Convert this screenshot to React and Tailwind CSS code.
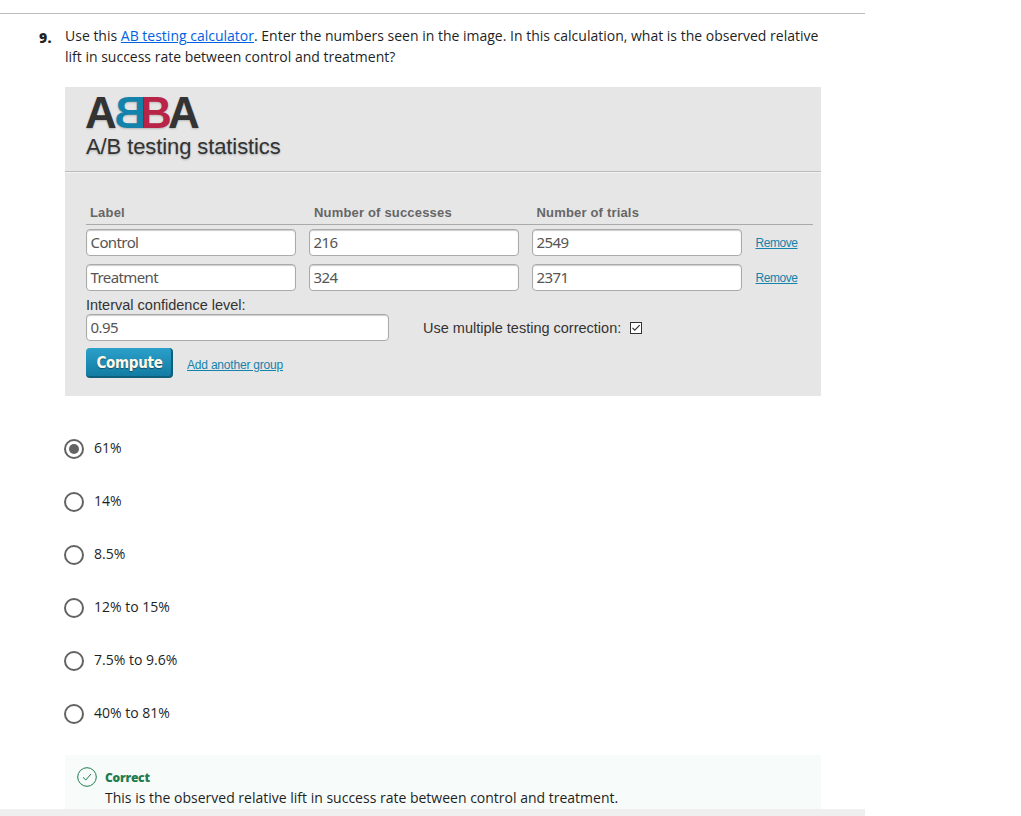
import React from 'react';

const answers = ['61%', '14%', '8.5%', '12% to 15%', '7.5% to 9.6%', '40% to 81%'];
const rows = [
  ['Control', '216', '2549'],
  ['Treatment', '324', '2371'],
];

function Field({ children, width = 'w-[210px]' }) {
  return (
    <div className={`${width} flex h-[27px] shrink-0 items-center rounded-[4px] border border-[#aaa] bg-white pl-[3.5px] font-['Noto_Sans',sans-serif] text-[15px] tracking-[-0.6px] text-[#555] shadow-[inset_0_1px_1px_rgba(0,0,0,0.2)]`}>
      {children}
    </div>
  );
}

function Logo() {
  return (
    <h1 className="-ml-px flex h-[44px] text-[44px] leading-[44px] font-bold text-[#333] [text-shadow:0_1px_2px_rgba(0,0,0,0.2)]">
      <span className="w-[30px]">A</span>
      <span className="w-[28px] -scale-x-100 text-[#1483ab]"><span className="-ml-[3px]">B</span></span>
      <span className="w-[25px] text-[#b82448]"><span className="-ml-[3px]">B</span></span>
      <span>A</span>
    </h1>
  );
}

function Calculator() {
  return (
    <section className="mt-[20px] h-[309px] w-[756px] bg-[#e6e6e6] font-['Liberation_Sans',sans-serif] text-[#333]">
      <header className="h-[85px] border-b border-[#bbb] pt-[4px] pl-[21px] shadow-[0_1px_0_#f2f2f2]">
        <Logo />
        <p className="text-[22px] leading-[24px] tracking-[-0.1px] [text-shadow:0_1px_2px_rgba(0,0,0,0.25)]">A/B testing statistics</p>
      </header>
      <div className="pt-[34px] pl-[21px]">
        <div className="flex h-[19px] w-[727px] border-b border-[#aaa] pl-[4px] text-[13px] leading-[14px] font-bold tracking-[0.18px] text-[#666]">
          <span className="w-[224px]">Label</span>
          <span className="w-[222.5px]">Number of successes</span>
          <span>Number of trials</span>
        </div>
        <div className="flex flex-col gap-[8px] pt-[4px]">
          {rows.map((row) => (
            <div key={row[0]} className="flex items-center gap-[13px]">
              {row.map((value) => <Field key={value}>{value}</Field>)}
              <a className="mt-[2px] ml-[0.5px] text-[12px] tracking-[-0.45px] text-[#1483ab] underline">Remove</a>
            </div>
          ))}
        </div>
        <div className="h-[23px] pt-[5px] text-[14.5px] leading-[18px]">Interval confidence level:</div>
        <div className="flex items-center">
          <Field width="w-[303px]">0.95</Field>
          <span className="mt-[2px] ml-[34px] text-[14.5px]">Use multiple testing correction:</span>
          <svg className="ml-[9px]" width="12" height="12" viewBox="0 0 12 12" fill="none" stroke="#333">
            <rect x=".5" y=".5" width="11" height="11" fill="#fff" />
            <path d="M2.5 5.8 4.8 8.2 9.7 3.2" strokeWidth="1.2" />
          </svg>
        </div>
        <div className="mt-[7px] flex items-center">
          <button className="h-[30px] w-[87px] rounded-[4px] border-r-2 border-b-2 border-[#0e5f7c] bg-linear-to-b from-[#2ba0ca] to-[#127ca3] pt-[3px] pl-[2px] font-['DejaVu_Sans_Condensed','DejaVu_Sans',sans-serif] text-[15px] leading-[25px] font-bold tracking-[-0.3px] text-[#fff8e8] [font-stretch:condensed] [text-shadow:0_1px_1px_rgba(0,0,0,0.4)]">Compute</button>
          <a className="mt-[4px] ml-[14px] text-[12px] tracking-[-0.2px] text-[#1483ab] underline">Add another group</a>
        </div>
      </div>
    </section>
  );
}

export default function App() {
  return (
    <div className="flex h-[816px] flex-col overflow-hidden bg-white pt-[13px] font-['Open_Sans',sans-serif] text-[14px] leading-[21px] text-[#1f1f1f]">
      <main className="h-[796px] w-[865px] shrink-0 overflow-hidden border-t border-[#bbb]">
        <div className="flex pt-[11px]">
          <span className="w-[65px] shrink-0 pt-[2px] pl-[39px] font-extrabold tracking-[0.4px]">9.</span>
          <div className="w-[756px] shrink-0">
            <p className="h-[42px]">
              Use this <a className="text-[#0062e3] underline">AB testing calculator</a>. Enter the numbers seen in the image. In this calculation, what is the observed relative lift in success rate between control and treatment?
            </p>
            <Calculator />
            <div className="-ml-px flex flex-col gap-[32px] pt-[43px]">
              {answers.map((answer, index) => (
                <label key={answer} className="flex h-[21px] items-start">
                  <span className="flex size-[20px] items-center justify-center rounded-full border-2 border-[#636363]">
                    {index === 0 && <span className="size-[10px] rounded-full bg-[#636363]" />}
                  </span>
                  <span className="-mt-[2px] ml-[10px]">{answer}</span>
                </label>
              ))}
            </div>
            <div className="mt-[30px] flex h-[70px] bg-[#f7fbf9] pt-[12px] pl-[12px]">
              <svg width="20" height="20" viewBox="0 0 20 20" fill="none" stroke="#1d7c50">
                <circle cx="10" cy="10" r="9.3" />
                <path d="M6 10.3 8.8 13 14 7" />
              </svg>
              <div className="ml-[8px]">
                <div className="h-[20px] text-[12px] font-extrabold tracking-[-0.2px] text-[#1d7c50]">Correct</div>
                <p>This is the observed relative lift in success rate between control and treatment.</p>
              </div>
            </div>
          </div>
        </div>
      </main>
      <div className="h-[7px] w-[865px] shrink-0 bg-[#efefef]" />
    </div>
  );
}
